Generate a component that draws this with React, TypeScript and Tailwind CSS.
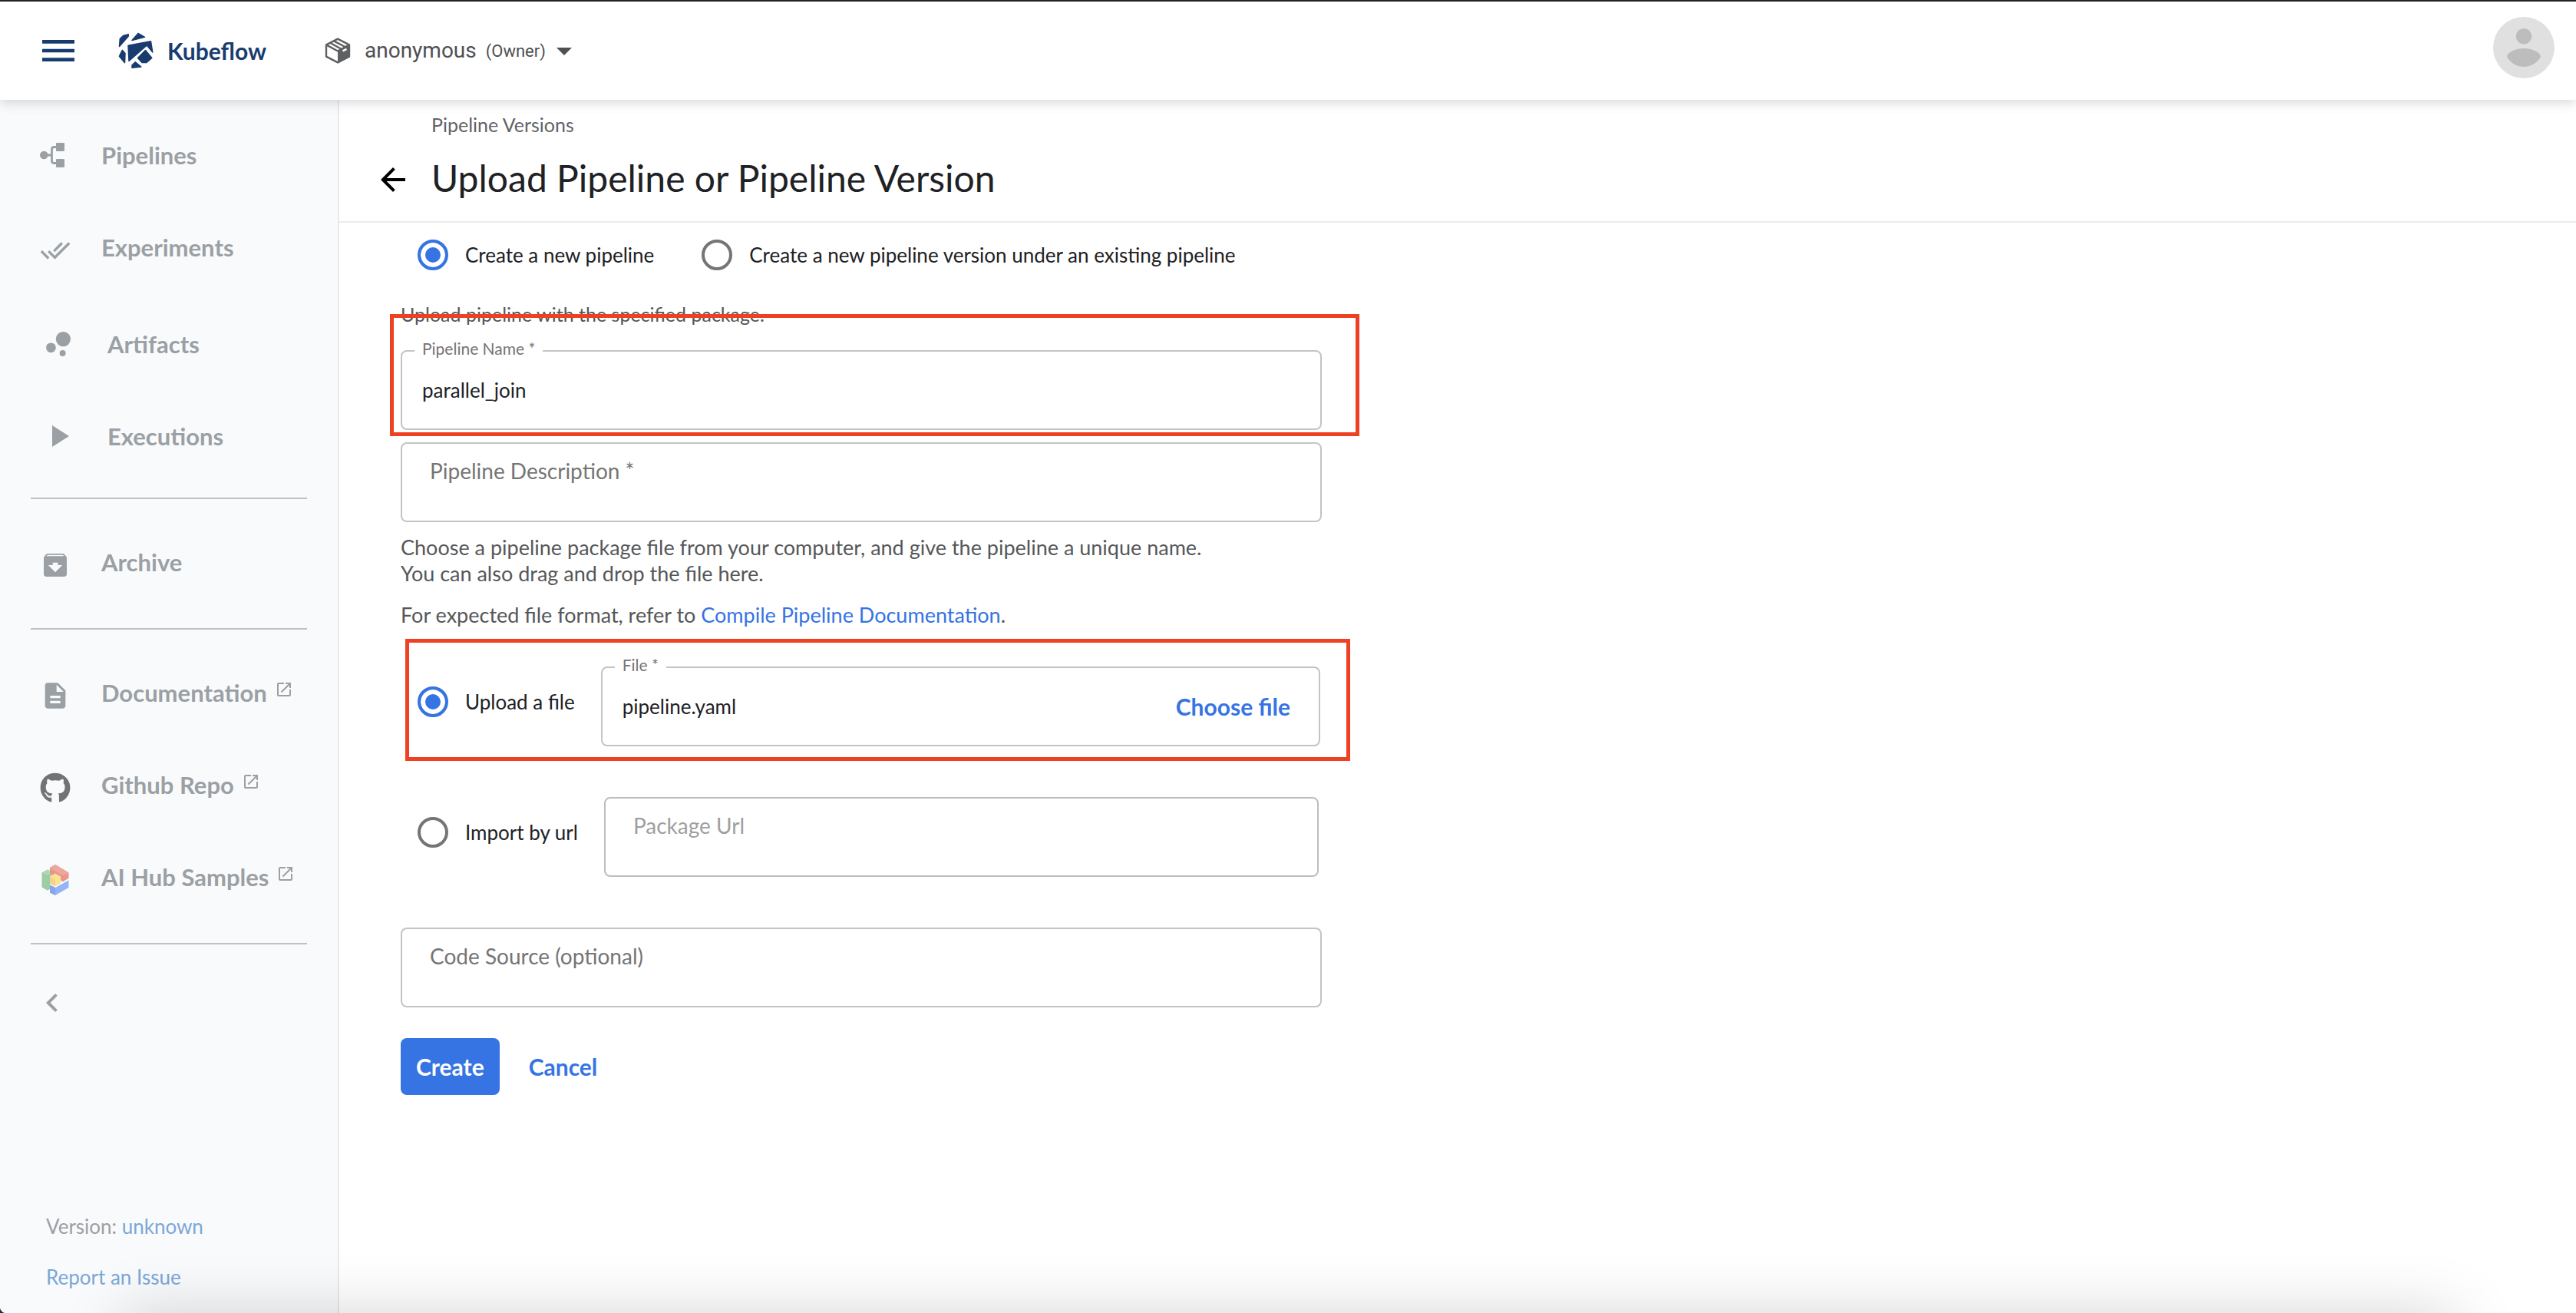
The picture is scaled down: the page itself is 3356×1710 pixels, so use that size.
import { useState, type ReactNode } from "react";
import {
  MdArchive,
  MdArrowBack,
  MdArrowDropDown,
  MdBubbleChart,
  MdChevronLeft,
  MdDescription,
  MdDoneAll,
  MdMenu,
  MdOpenInNew,
  MdPlayArrow,
} from "react-icons/md";
import { FaGithub } from "react-icons/fa";

function KubeflowLogo() {
  return (
    <svg viewBox="0 0 46 48" className="h-12 w-[46px]" fill="#183c70" stroke="#183c70" strokeWidth="1.5" strokeLinejoin="round" aria-hidden="true">
      <path d="M18 10.5 26 1.4 34.5 6.3Z" />
      <path d="M1.5 18.5 2.3 8.5 6.5 4.6 13.3 2.8 13.2 5.2Z" />
      <path d="M13 17.2 42.5 11.8 44.8 26 37.3 17 14 37.5Z" />
      <path d="M35.5 23.5 43.8 33.4 37 39.5H31L25.5 33.5Z" />
      <path d="M5.3 23.3 9 27.5 8.5 39.8 1.4 31.3Z" />
      <path d="M18 46.3V43L22.3 38.8 29.8 45Z" />
    </svg>
  );
}

function PackageIcon() {
  return (
    <svg viewBox="0 0 34 34" className="h-[34px] w-[34px]" aria-hidden="true">
      <path d="M17 17.5 33 9V25L17 33.5Z" fill="#5f6061" />
      <path d="M17 1.6 32 9.4V24.6L17 32.4 2 24.6V9.4Z" fill="none" stroke="#5f6061" strokeWidth="2.4" strokeLinejoin="round" />
      <path d="M2 9.4 17 17.5 32 9.4" fill="none" stroke="#5f6061" strokeWidth="2.4" />
      <path d="M7 6.8 21.5 14.8M12 4.4 26.5 12" fill="none" stroke="#5f6061" strokeWidth="2.4" />
      <path d="M23.5 17.4 28.5 14.8" stroke="#fff" strokeWidth="2.6" />
    </svg>
  );
}

function PipelineIcon() {
  return (
    <svg viewBox="0 0 32 32" className="h-8 w-8" fill="currentColor" aria-hidden="true">
      <circle cx="5.3" cy="16" r="5.3" />
      <rect x="21" y="0" width="11" height="11" rx="1" />
      <rect x="21" y="21" width="11" height="11" rx="1" />
      <path d="M9 16H16M22 5.5H18.5Q15.5 5.5 15.5 8.5V23.5Q15.5 26.5 18.5 26.5H22" fill="none" stroke="currentColor" strokeWidth="2.8" />
    </svg>
  );
}

function AiHubIcon() {
  return (
    <svg viewBox="0 0 36 40" className="h-10 w-9" aria-hidden="true">
      <path d="M.5 10.5 8 6.5 15 10V13L11 15.5V32L8 33.8.5 29.5Z" fill="#9ecca4" />
      <path d="M.5 10.5 8 6.5 15 10 8 14Z" fill="#aed7b4" />
      <path d="M11 4 18 0 35.5 10.5V17.8L28 22.2 11 12Z" fill="#e8958c" />
      <path d="M11 4 18 0 35.5 10.5 28 14.5Z" fill="#eda79f" />
      <path d="M11 26.5 18 30 35.5 20.5V30L18 40 11 36.5Z" fill="#93b4f6" />
      <path d="M11 26.5 18 30V40L11 36.5Z" fill="#84a6ec" />
      <path d="M18 11.6 25 15.5V24.5L18 28.5 11 24.5V15.5Z" fill="#f9e394" />
      <path d="M11 15.5 18 19.5V28.5L11 24.5Z" fill="#f7d28c" />
    </svg>
  );
}

function AvatarIcon() {
  return (
    <svg viewBox="0 0 80 80" className="size-20" aria-hidden="true">
      <circle cx="40" cy="40" r="40" fill="#e0e0e0" />
      <circle cx="40" cy="25.3" r="10.3" fill="#bdbdbd" />
      <path d="M18 52C18 46 30 41 40 41S62 46 62 52C58 59 50 65 40 65S22 59 18 52Z" fill="#bdbdbd" />
    </svg>
  );
}

type NavItemProps = { icon: ReactNode; label: string; external?: boolean };

function NavItem({ icon, label, external }: NavItemProps) {
  return (
    <a href="#" className="flex h-[120px] items-center gap-10 pl-[52px] text-[31px] font-bold">
      {icon}
      <span className="flex items-center gap-2.5">
        {label}
        {external && <MdOpenInNew className="mb-2 size-6" />}
      </span>
    </a>
  );
}

function Divider() {
  return <hr className="mx-10 border-t-2 border-[#bdc1c6]" />;
}

type FieldProps = {
  id: string;
  label: string;
  defaultValue?: string;
  disabled?: boolean;
  children?: ReactNode;
};

function Field({ id, label, defaultValue, disabled, children }: FieldProps) {
  const [value, setValue] = useState(defaultValue ?? "");
  return (
    <div
      className={
        disabled
          ? "relative flex h-[104px] flex-1 items-center rounded-lg border-2 border-[#bdbdbd] text-[#9f9f9f]"
          : "relative flex h-[104px] flex-1 items-center rounded-lg border-2 border-[#c4c4c4] text-[#757575]"
      }
    >
      <label
        htmlFor={id}
        className={
          value
            ? "absolute -top-[18px] left-4 bg-white px-2.5 text-[21px] leading-7"
            : "absolute top-[18px] left-9 text-[28px] leading-[34px]"
        }
      >
        {label}
      </label>
      <input
        id={id}
        type="text"
        value={value}
        disabled={disabled}
        onChange={(e) => setValue(e.target.value)}
        className="h-full min-w-0 flex-1 bg-transparent px-[26px] text-[26px] text-[#202124] outline-none"
      />
      {children}
    </div>
  );
}

type RadioProps = { name: string; label: string; defaultChecked?: boolean };

function Radio({ name, label, defaultChecked }: RadioProps) {
  return (
    <label className="flex shrink-0 items-center gap-[22px] text-[26px] text-[#202124]">
      <input
        type="radio"
        name={name}
        defaultChecked={defaultChecked}
        className="size-10 appearance-none rounded-full border-4 border-[#757575] checked:border-[#3574e2] checked:bg-[#3574e2] checked:shadow-[inset_0_0_0_6px_#fff]"
      />
      {label}
    </label>
  );
}

export default function App() {
  return (
    <div className="bg-[#12384f]">
      <div className="relative flex min-h-screen flex-col overflow-hidden rounded-bl-lg border-t-2 border-[#242224] bg-white font-[Lato,sans-serif]">
        <header className="relative z-10 flex h-32 items-center bg-white pr-7 pl-12 shadow-[0_4px_14px_rgba(60,64,80,0.2)]">
          <button type="button" aria-label="Menu" className="text-[#183c70]">
            <MdMenu className="size-14" />
          </button>
          <a href="#" className="ml-[50px] flex items-center gap-[18px] text-[30px] font-bold text-[#183c70]">
            <KubeflowLogo />
            Kubeflow
          </a>
          <button type="button" className="ml-[76px] flex items-center font-[Roboto,sans-serif] text-[#4f5052]">
            <PackageIcon />
            <span className="ml-[18px] text-[28px]">anonymous</span>
            <span className="ml-3 text-[22px]">(Owner)</span>
            <MdArrowDropDown className="size-12" />
          </button>
          <button type="button" aria-label="Account" className="mb-2 ml-auto">
            <AvatarIcon />
          </button>
        </header>

        <div className="flex flex-1">
          <nav className="flex w-[442px] shrink-0 flex-col border-r-2 border-[#e8e9eb] bg-[#f9fafc] pt-3 text-[#9aa0a4]">
            <NavItem icon={<span className="w-10"><PipelineIcon /></span>} label="Pipelines" />
            <NavItem icon={<MdDoneAll className="mt-2 size-10" />} label="Experiments" />
            <div className="mt-1.5 mb-5">
              <NavItem icon={<MdBubbleChart className="size-12" />} label="Artifacts" />
              <NavItem icon={<MdPlayArrow className="size-12" />} label="Executions" />
            </div>
            <Divider />
            <div className="mt-[22px] mb-[26px]">
              <NavItem icon={<MdArchive className="mt-2 size-10" />} label="Archive" />
            </div>
            <Divider />
            <div className="mt-[22px] mb-[26px]">
              <NavItem icon={<MdDescription className="mt-2 size-10" />} label="Documentation" external />
              <NavItem icon={<FaGithub className="mt-2 size-10 text-[#737373]" />} label="Github Repo" external />
              <NavItem icon={<span className="mt-2 flex w-10 justify-center"><AiHubIcon /></span>} label="AI Hub Samples" external />
            </div>
            <Divider />
            <button type="button" aria-label="Collapse" className="mt-[52px] ml-11 self-start">
              <MdChevronLeft className="size-12" />
            </button>
            <div className="mt-auto pb-3.5 pl-[60px] text-[26px] leading-[66px]">
              <p>
                Version: <a href="#" className="text-[#7ba7d8]">unknown</a>
              </p>
              <p>
                <a href="#" className="text-[#7ba7d8]">Report an Issue</a>
              </p>
            </div>
          </nav>

          <main className="min-w-0 flex-1">
            <div className="h-40 border-b-2 border-[#ebebeb]">
              <a href="#" className="ml-[120px] block text-[25px] leading-[64px] text-[#5f6368]">Pipeline Versions</a>
              <div className="flex h-20 items-center gap-[26px] pl-[46px]">
                <button type="button" aria-label="Back" className="text-black">
                  <MdArrowBack className="size-12" />
                </button>
                <h1 className="mb-1 text-5xl text-[#202124]">Upload Pipeline or Pipeline Version</h1>
              </div>
            </div>

            <form className="max-w-[1280px] pl-20 text-[27px] text-[#555759]" onSubmit={(e) => e.preventDefault()}>
              <div className="flex h-[84px] items-center gap-[62px] pl-[22px]">
                <Radio name="target" label="Create a new pipeline" defaultChecked />
                <Radio name="target" label="Create a new pipeline version under an existing pipeline" />
              </div>
              <p className="mt-[18px] text-[25px] leading-[34px]">Upload pipeline with the specified package.</p>
              <div className="relative mt-[30px] flex">
                <Field id="name" label="Pipeline Name *" defaultValue="parallel_join" />
                <div className="pointer-events-none absolute -top-[47px] -right-[49px] -bottom-2 -left-3.5 border-5 border-[#ee4023]" />
              </div>
              <div className="mt-4 flex">
                <Field id="description" label="Pipeline Description *" />
              </div>
              <p className="mt-4 leading-[34px]">
                Choose a pipeline package file from your computer, and give the pipeline a unique name.
                <br />
                You can also drag and drop the file here.
              </p>
              <p className="mt-5 leading-[34px]">
                For expected file format, refer to <a href="#" className="text-[#3574e2]">Compile Pipeline Documentation</a>.
              </p>
              <div className="relative mt-[50px] flex items-center gap-[34px] pr-0.5 pl-[22px]">
                <div className="mb-3">
                  <Radio name="source" label="Upload a file" defaultChecked />
                </div>
                <Field id="file" label="File *" defaultValue="pipeline.yaml">
                  <button type="button" className="mr-[37px] text-[30px] font-bold text-[#3574e2]">Choose file</button>
                </Field>
                <div className="pointer-events-none absolute -top-9 -right-[37px] -bottom-[19px] left-1.5 border-5 border-[#ee4023]" />
              </div>
              <div className="mt-[66px] flex items-center gap-[34px] pr-1 pl-[22px]">
                <div className="mb-3">
                  <Radio name="source" label="Import by url" />
                </div>
                <Field id="url" label="Package Url" disabled />
              </div>
              <div className="mt-[66px] flex">
                <Field id="code" label="Code Source (optional)" />
              </div>
              <div className="mt-10 flex items-center gap-[38px] text-[30px] font-bold">
                <button type="submit" className="h-[74px] rounded-lg bg-[#3574e2] px-5 text-white">Create</button>
                <button type="button" className="text-[#3574e2]">Cancel</button>
              </div>
            </form>
          </main>
        </div>
        <div className="pointer-events-none absolute top-full right-[156px] left-40 h-40 shadow-[0_0_80px_rgba(0,0,0,0.17)]" />
      </div>
    </div>
  );
}
